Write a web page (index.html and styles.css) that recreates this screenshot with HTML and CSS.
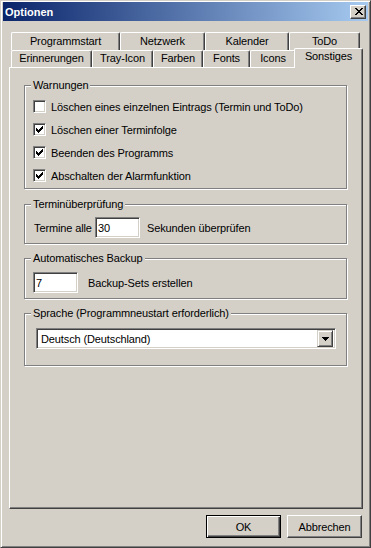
FILE: index.html
```html
<!DOCTYPE html>
<html lang="de">
<head>
  <meta charset="UTF-8">
  <meta name="viewport" content="width=device-width, initial-scale=1.0">
  <title>Optionen</title>
  <link rel="stylesheet" href="styles.css">
</head>
<body>
  <div class="window">
    <div class="titlebar">
      <span class="title">Optionen</span>
      <div class="close-btn">
        <svg width="8" height="7" viewBox="0 0 8 7" shape-rendering="crispEdges"><path d="M0 0h2v1h-2zM6 0h2v1h-2zM1 1h2v1h-2zM5 1h2v1h-2zM2 2h4v1h-4zM3 3h2v1h-2zM2 4h4v1h-4zM1 5h2v1h-2zM5 5h2v1h-2zM0 6h2v1h-2zM6 6h2v1h-2z" fill="#000"/></svg>
      </div>
    </div>

    <div class="dialog-body">
      <div class="tabs">
        <div class="tab-row tab-row-back">
          <div class="tab tab-programmstart">Programmstart</div>
          <div class="tab tab-netzwerk">Netzwerk</div>
          <div class="tab tab-kalender">Kalender</div>
          <div class="tab tab-todo">ToDo</div>
        </div>
        <div class="tab-row tab-row-front">
          <div class="tab tab-erinnerungen">Erinnerungen</div>
          <div class="tab tab-tray">Tray-Icon</div>
          <div class="tab tab-farben">Farben</div>
          <div class="tab tab-fonts">Fonts</div>
          <div class="tab tab-icons">Icons</div>
          <div class="tab tab-sonstiges active">Sonstiges</div>
        </div>
      </div>

      <div class="tab-panel">
        <div class="group group-warnungen">
          <div class="group-title">Warnungen</div>
          <div class="check-list">
            <div class="check-row"><span class="checkbox"></span>Löschen eines einzelnen Eintrags (Termin und ToDo)</div>
            <div class="check-row"><span class="checkbox checked"><svg width="7" height="7" viewBox="0 0 7 7" shape-rendering="crispEdges"><path d="M6 0h1v1h-1zM5 1h2v1h-2zM0 2h1v1h-1zM4 2h3v1h-3zM0 3h2v1h-2zM3 3h3v1h-3zM0 4h5v1h-5zM1 5h3v1h-3zM2 6h1v1h-1z" fill="#000"/></svg></span>Löschen einer Terminfolge</div>
            <div class="check-row"><span class="checkbox checked"><svg width="7" height="7" viewBox="0 0 7 7" shape-rendering="crispEdges"><path d="M6 0h1v1h-1zM5 1h2v1h-2zM0 2h1v1h-1zM4 2h3v1h-3zM0 3h2v1h-2zM3 3h3v1h-3zM0 4h5v1h-5zM1 5h3v1h-3zM2 6h1v1h-1z" fill="#000"/></svg></span>Beenden des Programms</div>
            <div class="check-row"><span class="checkbox checked"><svg width="7" height="7" viewBox="0 0 7 7" shape-rendering="crispEdges"><path d="M6 0h1v1h-1zM5 1h2v1h-2zM0 2h1v1h-1zM4 2h3v1h-3zM0 3h2v1h-2zM3 3h3v1h-3zM0 4h5v1h-5zM1 5h3v1h-3zM2 6h1v1h-1z" fill="#000"/></svg></span>Abschalten der Alarmfunktion</div>
          </div>
        </div>

        <div class="group group-termin">
          <div class="group-title">Terminüberprüfung</div>
          <div class="field-row">
            <span class="field-label">Termine alle</span>
            <input class="edit" type="text" value="30">
            <span class="field-after">Sekunden überprüfen</span>
          </div>
        </div>

        <div class="group group-backup">
          <div class="group-title">Automatisches Backup</div>
          <div class="field-row">
            <input class="edit" type="text" value="7">
            <span class="field-after wide">Backup-Sets erstellen</span>
          </div>
        </div>

        <div class="group group-sprache">
          <div class="group-title">Sprache (Programmneustart erforderlich)</div>
          <div class="combo">
            <span class="combo-text">Deutsch (Deutschland)</span>
            <span class="combo-btn">
              <svg width="7" height="4" viewBox="0 0 7 4" shape-rendering="crispEdges"><path d="M0 0h7v1h-7zM1 1h5v1h-5zM2 2h3v1h-3zM3 3h1v1h-1z" fill="#000"/></svg>
            </span>
          </div>
        </div>
      </div>

      <div class="button-row">
        <button class="btn btn-default">OK</button>
        <button class="btn">Abbrechen</button>
      </div>
    </div>
  </div>
</body>
</html>
```

FILE: styles.css
```css
* {
  box-sizing: border-box;
}

body {
  margin: 0;
  font-family: "Liberation Sans", Arial, sans-serif;
  font-size: 11px;
  letter-spacing: -0.12px;
  color: #000;
  background: #d4d0c8;
}

.window {
  width: 371px;
  height: 548px;
  display: flex;
  flex-direction: column;
  background: #d4d0c8;
  border: 1px solid;
  border-color: #d4d0c8 #404040 #404040 #d4d0c8;
  box-shadow: inset 1px 1px #fff, inset -1px -1px #808080;
  padding: 1px 2px 2px 2px;
}

/* title bar */
.titlebar {
  height: 19px;
  display: flex;
  align-items: center;
  justify-content: space-between;
  padding: 0 2px;
  background: linear-gradient(to right, #0a246a, #a6caf0);
}

.title {
  color: #fff;
  font-weight: bold;
  font-size: 11px;
  letter-spacing: 0;
}

.close-btn {
  width: 16px;
  height: 14px;
  display: flex;
  align-items: center;
  justify-content: center;
  background: #d4d0c8;
  border: 1px solid;
  border-color: #fff #404040 #404040 #fff;
  box-shadow: inset -1px -1px #808080;
  padding-left: 1px;
}

.dialog-body {
  flex: 1;
  display: flex;
  flex-direction: column;
  padding: 11px 5px 0 6px;
}

/* tabs */
.tabs {
  margin-left: 2px;
}

.tab-row {
  display: flex;
}

.tab-row-back {
  height: 18px;
}

.tab-row-front {
  height: 17px;
}

.tab {
  height: 100%;
  text-align: center;
  white-space: nowrap;
  border-top: 1px solid #fff;
  border-left: 1px solid #fff;
  border-right: 1px solid #404040;
  border-radius: 2px 2px 0 0;
  box-shadow: inset -1px 0 #808080;
  background: #d4d0c8;
}

.tab-row-back .tab {
  line-height: 16px;
}

.tab-row-front .tab {
  line-height: 15px;
}

.tab-programmstart { width: 109px; }
.tab-netzwerk { width: 85px; }
.tab-kalender { width: 84px; }
.tab-todo { width: 71px; }
.tab-erinnerungen { width: 81px; }
.tab-tray { width: 61px; }
.tab-farben { width: 50px; }
.tab-fonts { width: 47px; }
.tab-icons { width: 46px; }
.tab-sonstiges { width: 65px; }

.tab-row-front .tab.active {
  position: relative;
  z-index: 1;
  width: 69px;
  height: 20px;
  margin: -2px -2px 0 -2px;
  line-height: 15px;
}

.tab-panel {
  height: 442px;
  border: 1px solid;
  border-color: #fff #404040 #404040 #fff;
  box-shadow: inset -1px -1px #808080;
  padding: 17px 15px 0 14px;
}

/* group boxes */
.group {
  display: flex;
  flex-direction: column;
  border: 1px solid #808080;
  box-shadow: inset 1px 1px #fff, 1px 1px #fff;
  padding: 0 8px 1px 8px;
}

.group-title {
  align-self: flex-start;
  margin: -7px 0 0 -2px;
  padding: 0 2px;
  line-height: 13px;
  background: #d4d0c8;
}

.group-termin {
  margin-top: 15px;
  padding-bottom: 5px;
}

.group-backup {
  margin-top: 14px;
  padding-bottom: 5px;
}

.group-sprache {
  margin-top: 14px;
  padding-bottom: 16px;
}

.check-list {
  margin-top: 3px;
}

.check-row {
  height: 23px;
  display: flex;
  align-items: center;
  gap: 5px;
  white-space: nowrap;
}

.checkbox {
  width: 13px;
  height: 13px;
  flex: none;
  display: flex;
  padding: 2px;
  background: #fff;
  border: 1px solid;
  border-color: #808080 #fff #fff #808080;
  box-shadow: inset 1px 1px #404040, inset -1px -1px #d4d0c8;
}

/* edit fields */
.field-row {
  height: 21px;
  display: flex;
  align-items: center;
  white-space: nowrap;
}

.group-termin .field-row {
  margin-top: 6px;
}

.group-backup .field-row {
  margin-top: 7px;
}

.field-label {
  width: 62px;
  padding-left: 1px;
}

.field-after {
  margin-left: 7px;
}

.field-after.wide {
  margin-left: 10px;
}

.edit {
  width: 45px;
  height: 21px;
  margin: 0;
  padding: 0 2px;
  font: inherit;
  letter-spacing: inherit;
  color: #000;
  background: #fff;
  border: 1px solid;
  border-color: #808080 #fff #fff #808080;
  box-shadow: inset 1px 1px #404040, inset -1px -1px #d4d0c8;
  outline: none;
}

/* combo box */
.combo {
  width: 300px;
  height: 21px;
  margin: 8px 0 0 3px;
  display: flex;
  align-items: center;
  justify-content: space-between;
  padding: 2px;
  background: #fff;
  border: 1px solid;
  border-color: #808080 #fff #fff #808080;
  box-shadow: inset 1px 1px #404040, inset -1px -1px #d4d0c8;
}

.combo-text {
  padding-left: 2px;
}

.combo-btn {
  width: 16px;
  height: 17px;
  display: flex;
  align-items: center;
  justify-content: center;
  background: #d4d0c8;
  border: 1px solid;
  border-color: #d4d0c8 #404040 #404040 #d4d0c8;
  box-shadow: inset 1px 1px #fff, inset -1px -1px #808080;
}

/* buttons */
.button-row {
  display: flex;
  justify-content: flex-end;
  gap: 6px;
  margin-top: 6px;
  padding-right: 1px;
}

.btn {
  width: 75px;
  height: 23px;
  padding: 0;
  font: inherit;
  letter-spacing: inherit;
  color: #000;
  background: #d4d0c8;
  border: 1px solid;
  border-color: #fff #404040 #404040 #fff;
  box-shadow: inset -1px -1px #808080;
}

.btn-default {
  border-color: #000;
  box-shadow: inset 1px 1px #fff, inset -1px -1px #404040, inset -2px -2px #808080;
}
```
